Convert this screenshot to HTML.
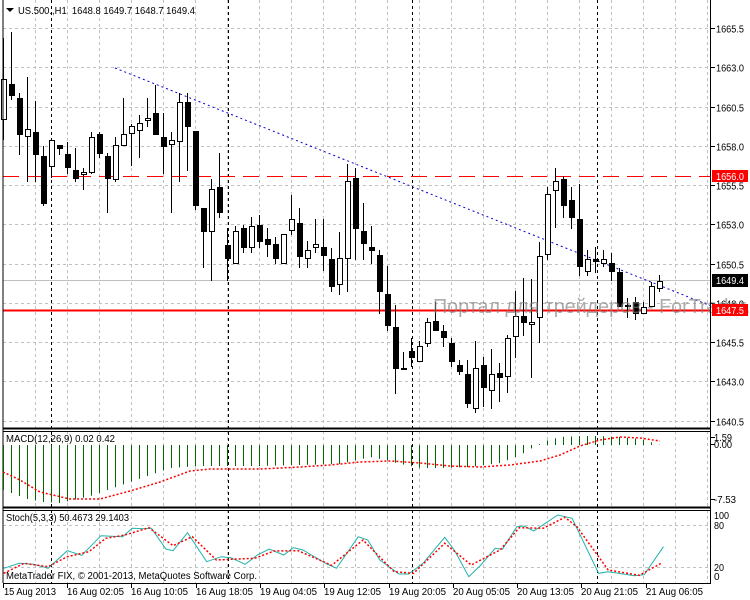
<!DOCTYPE html>
<html><head><meta charset="utf-8"><style>
html,body{margin:0;padding:0;background:#fff;}
svg{display:block;font-family:"Liberation Sans",sans-serif;font-size:10px;}
</style></head><body>
<svg id="c" width="750" height="600" xmlns="http://www.w3.org/2000/svg"></svg>
<script>
var s='';
function L(x1,y1,x2,y2,c,w,d){s+='<line x1="'+x1+'" y1="'+y1+'" x2="'+x2+'" y2="'+y2+'" stroke="'+c+'" stroke-width="'+(w||1)+'"'+(d?' stroke-dasharray="'+d+'"':'')+'/>';}
function R(x,y,w,h,f,st){s+='<rect x="'+x+'" y="'+y+'" width="'+w+'" height="'+h+'" fill="'+f+'"'+(st?' stroke="'+st+'" stroke-width="1"':'')+'/>';}
function T(x,y,t,c,extra){s+='<text x="'+x+'" y="'+y+'" fill="'+(c||'#000')+'" '+(extra||'')+'>'+t+'</text>';}
function TL(x,y,t,w,c,extra){T(x,y,t,c,'textLength="'+w+'" lengthAdjust="spacingAndGlyphs" '+(extra||''));}
for(var x=35.5;x<711;x+=32){L(x,0,x,428,'#c0c0c0',1,'3,3');L(x,431,x,507,'#c0c0c0',1,'3,3');L(x,510,x,583,'#c0c0c0',1,'3,3');}
var labs=['1665.5','1663.0','1660.5','1658.0','1655.5','1653.0','1650.5','1648.0','1645.5','1643.0','1640.5'];
function py(p){return 28+(1665.5-p)*15.7;}
for(var i=0;i<labs.length;i++){var y=Math.round(py(parseFloat(labs[i])))+.5;L(3,y,711,y,'#c0c0c0',1,'3,3');L(711,y,715,y,'#000');TL(716,y+4,labs[i],28);}
L(3,525.5,711,525.5,'#c0c0c0',1,'3,3');L(3,567.5,711,567.5,'#c0c0c0',1,'3,3');
[51.5,228.5,412.5,597.5].forEach(function(x){L(x,0,x,583,'#000',1,'3,3');});
L(3,176.5,711,176.5,'#ff0000',1,'16,8');
L(3,280.5,711,280.5,'#c0c0c0',1);
L(3,310.5,711,310.5,'#ff0000',2);
L(115,68,711,306,'#0000cc',1,'2,3');
var C=[[38,140,79,120,1],[32,100,84,96,0],[93,155,98,135,0],[77,182,129,137,1],[101,182,132,155,0],[146,206,156,204,0],[140,178,140,167,1],[145,155,145,149,0],[142,174,154,168,0],[148,182,170,179,0],[168,190,172,175,1],[132,174,137,173,1],[132,158,134,154,0],[153,213,156,179,0],[137,182,145,180,1],[98,146,134,146,1],[124,166,126,134,1],[115,158,123,131,1],[98,127,118,121,1],[85,135,113,135,0],[113,174,137,147,0],[132,213,140,145,1],[93,182,102,142,1],[93,171,102,127,0],[131,210,131,206,0],[208,268,208,232,0],[179,281,189,232,1],[153,218,187,213,0],[228,281,245,259,0],[226,264,231,264,1],[225,253,228,248,0],[217,253,226,248,1],[215,248,225,242,0],[228,257,239,245,0],[237,264,244,259,0],[234,264,234,264,1],[195,235,219,231,1],[208,268,223,257,0],[241,268,250,259,1],[219,253,244,248,1],[219,271,247,256,0],[248,292,259,287,0],[232,295,258,285,1],[164,292,181,259,1],[168,260,178,229,0],[203,260,231,244,0],[226,264,247,251,0],[250,314,255,292,0],[266,331,294,326,0],[305,394,327,369,0],[352,369,368,369,0],[338,367,351,358,0],[341,362,346,362,1],[318,347,322,344,1],[302,331,321,331,0],[325,347,331,338,0],[338,367,343,362,0],[360,375,365,372,0],[360,408,374,404,0],[341,413,368,409,1],[357,407,365,388,0],[349,409,374,391,1],[363,402,373,378,0],[335,393,338,377,1],[291,358,316,337,1],[278,336,316,323,0],[279,378,322,325,1],[242,343,256,318,1],[187,260,194,255,1],[168,228,181,191,1],[176,218,179,206,0],[187,229,200,218,0],[184,276,219,267,0],[250,276,259,272,1],[247,273,259,262,0],[250,267,259,264,1],[253,281,263,272,0],[268,307,272,307,0],[298,318,305,307,0],[297,320,302,314,0],[302,314,307,314,1],[282,307,286,307,1],[275,292,281,289,1]];
C.forEach(function(c,i){var cx=3+8*i;R(cx,c[0],1,c[1]-c[0],'#000');var h=Math.max(1,c[3]-c[2]);
 if(c[4])R(cx-2+.5,c[2]+.5,5,Math.max(1,h-1),'#fff','#000');else R(cx-2,c[2],6,Math.max(2,h),'#000');});
TL(433,313,'Портал для трейдеров - ForTrader.ru',335,'#808080','font-size="20" opacity="0.65"');
R(712,170,36,12,'#ff0000');TL(716,180,'1656.0',28,'#fff');
R(712,274,36,13,'#000');TL(716,284,'1649.4',28,'#fff');
R(712,304,36,12,'#ff0000');TL(716,314,'1647.5',28,'#fff');
L(3,0,3,583,'#000');L(710.5,0,710.5,583,'#000');
L(3,428.5,711,428.5,'#000',2);L(3,431.5,711,431.5,'#000');L(3,507.5,711,507.5,'#000',2);L(3,510.5,711,510.5,'#000');L(3,583.5,711,583.5,'#000');
s+='<polygon points="6,8 14,8 10,12" fill="#000"/>';
TL(18,14,'US.500.,H1&#160;&#160;1648.8 1649.7 1648.7 1649.4',177);
function interp(k,x){for(var j=0;j<k.length-1;j++){if(x>=k[j][0]&&x<=k[j+1][0]){var t=(x-k[j][0])/(k[j+1][0]-k[j][0]);return k[j][1]+t*(k[j+1][1]-k[j][1]);}}return k[k.length-1][1];}
var hk=[[3,490],[27,499],[43,502],[60,503],[90,496],[130,482],[170,468],[200,466],[260,466],[300,465],[340,464],[370,457],[385,460],[400,464],[420,468],[440,468],[470,467],[500,463],[520,455],[535,446],[548,440],[560,437],[580,436],[600,436],[620,437],[640,439],[660,445]];
for(var i=0;i<83;i++){var x=3+8*i;var yb=interp(hk,x);var y0=445;if(yb>y0)R(x,y0,1,yb-y0,'#006400');else R(x,yb,1,y0-yb,'#006400');}
var sk=[[3,472],[20,480],[40,492],[70,499],[100,499],[130,491],[160,482],[190,471],[210,469],[260,469],[300,467],[330,465],[360,462],[390,461],[420,463],[450,466],[480,467],[510,465],[540,461],[560,455],[580,446],[600,440],[620,437],[640,438],[660,441]];
s+='<polyline fill="none" stroke="#ff0000" stroke-width="1.5" stroke-dasharray="2,2" points="'+sk.map(function(p){return p.join(',')}).join(' ')+'"/>';
TL(6,442,'MACD(12,26,9) 0.02 0.42',109);
TL(714,441,'1.59',18);TL(714,448,'0.00',18);TL(714,503,'-7.53',22);
L(711,437.5,715,437.5,'#000');L(711,444.5,715,444.5,'#000');L(711,499.5,715,499.5,'#000');
var mk=[[8,505],[40,490],[70,493],[100,505],[140,452],[170,466],[210,407],[255,410],[275,385],[300,386],[315,385],[345,447],[360,452],[390,398],[430,485],[460,470],[480,473],[510,493],[535,465],[560,447],[590,465],[610,443],[630,450],[680,492],[700,505],[745,410],[765,420],[790,480],[830,522],[850,522],[880,490],[925,412],[945,450],[975,530],[1000,495],[1030,445],[1045,448],[1075,380],[1090,378],[1110,393],[1160,345],[1190,355],[1245,520],[1265,515],[1320,527],[1340,524],[1380,440]];
var rk=[[8,520],[50,490],[100,500],[140,470],[185,455],[220,415],[260,405],[310,383],[360,437],[400,410],[450,480],[480,478],[530,475],[570,453],[620,452],[690,496],[755,420],[820,515],[860,520],[925,430],[980,495],[1040,450],[1080,383],[1130,385],[1175,352],[1200,380],[1265,510],[1330,526],[1375,490]];
function cv(k){return k.map(function(p){return (p[0]/2.08).toFixed(1)+','+(400+p[1]/3).toFixed(1)}).join(' ');}
s+='<polyline fill="none" stroke="#20b2aa" stroke-width="1" points="'+cv(mk)+'"/>';
s+='<polyline fill="none" stroke="#ff0000" stroke-width="1.5" stroke-dasharray="2,2" points="'+cv(rk)+'"/>';
TL(6,521,'Stoch(5,3,3) 50.4673 29.1403',123);
TL(6,579,'MetaTrader FIX, © 2001-2013, MetaQuotes Software Corp.',251);
TL(714,519,'100',15);TL(714,529,'80',10);TL(714,571,'20',10);T(714,580,'0');
var d=['15 Aug 2013','16 Aug 02:05','16 Aug 10:05','16 Aug 18:05','19 Aug 04:05','19 Aug 12:05','19 Aug 20:05','20 Aug 05:05','20 Aug 13:05','20 Aug 21:05','21 Aug 06:05'];
d.forEach(function(t,i){var x=i==0?3:Math.round(67+64.3*(i-1));L(x+.5,583,x+.5,588,'#000');TL(x+(i==0?1:0),595,t,i==0?52:57);});
document.getElementById('c').innerHTML=s;
</script>
</body></html>
